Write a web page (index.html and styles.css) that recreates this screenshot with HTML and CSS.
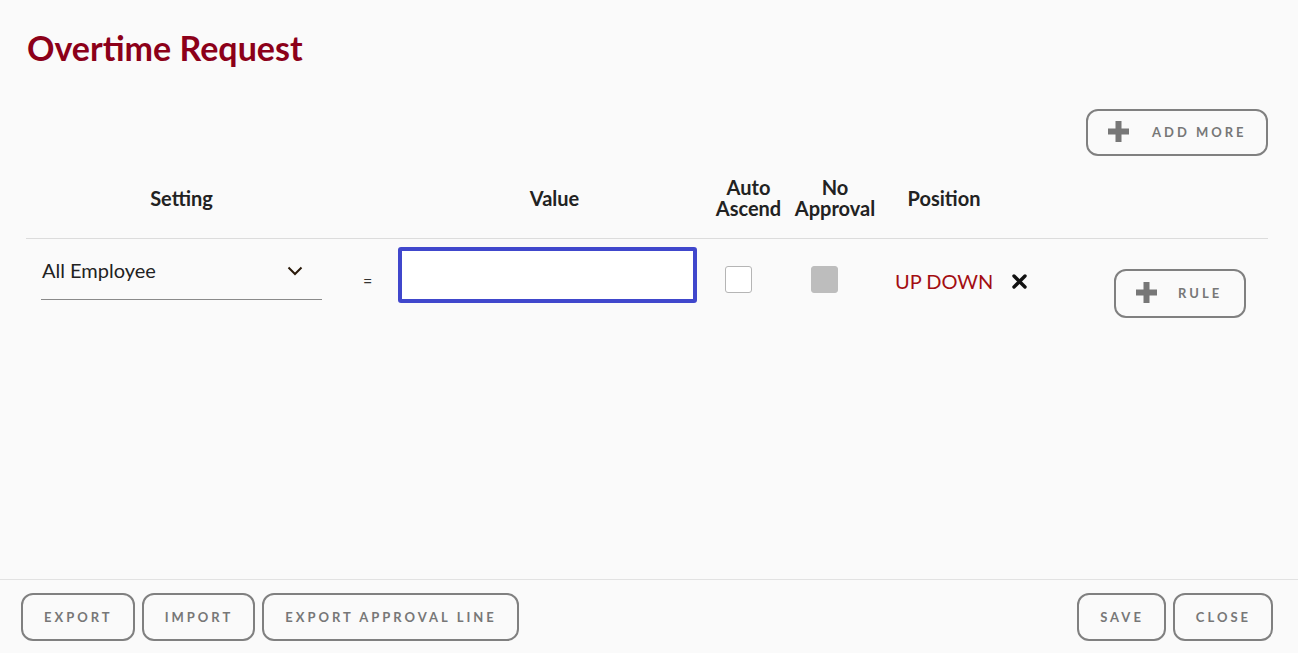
FILE: index.html
```html
<!DOCTYPE html>
<html>
<head>
<meta charset="utf-8">
<link rel="stylesheet" href="styles.css">
</head>
<body>
<div class="page">
  <main class="main">
    <h1 class="title">Overtime Request</h1>
    <div class="toolbar">
      <button class="btn btn-icon add-more">
        <svg class="plus" width="21" height="21" viewBox="0 0 21 21"><rect x="7.5" y="0" width="6" height="21" fill="#777"/><rect x="0" y="7.5" width="21" height="6" fill="#777"/></svg>
        <span>ADD MORE</span>
      </button>
    </div>
    <div class="grid head">
      <div class="hc">Setting</div>
      <div class="hc"></div>
      <div class="hc">Value</div>
      <div class="hc"><span class="ln">Auto</span><span class="ln">Ascend</span></div>
      <div class="hc"><span class="ln">No</span><span class="ln">Approval</span></div>
      <div class="hc">Position</div>
      <div class="hc"></div>
    </div>
    <div class="grid row">
      <div class="cell">
        <div class="select">
          <span>All Employee</span>
          <svg class="chev" width="16" height="10" viewBox="0 0 16 10"><polyline points="1.5,1.5 8,8 14.5,1.5" fill="none" stroke="#2a1a0a" stroke-width="2"/></svg>
        </div>
      </div>
      <div class="cell eq">=</div>
      <div class="cell"><div class="input"></div></div>
      <div class="cell"><div class="check"></div></div>
      <div class="cell"><div class="check disabled"></div></div>
      <div class="cell pos">UP DOWN</div>
      <div class="cell tail">
        <svg class="x" width="15" height="15" viewBox="0 0 15 15"><path d="M2 2 L13 13 M13 2 L2 13" stroke="#111" stroke-width="3.4" stroke-linecap="round"/></svg>
        <button class="btn btn-icon rule">
          <svg class="plus" width="21" height="21" viewBox="0 0 21 21"><rect x="7.5" y="0" width="6" height="21" fill="#777"/><rect x="0" y="7.5" width="21" height="6" fill="#777"/></svg>
          <span>RULE</span>
        </button>
      </div>
    </div>
  </main>
  <footer class="footer">
    <div class="group">
      <button class="btn fbtn">EXPORT</button>
      <button class="btn fbtn">IMPORT</button>
      <button class="btn fbtn">EXPORT APPROVAL LINE</button>
    </div>
    <div class="group">
      <button class="btn fbtn">SAVE</button>
      <button class="btn fbtn">CLOSE</button>
    </div>
  </footer>
</div>
</body>
</html>
```

FILE: styles.css
```css
* { box-sizing: border-box; }
html, body { margin: 0; padding: 0; }
body {
  background: #fafafa;
  font-family: Lato, "Open Sans", sans-serif;
  color: #222;
}
.page {
  height: 653px;
  display: flex;
  flex-direction: column;
}
.main {
  flex: 1;
  padding: 0 30px 0 26px;
}
.title {
  margin: 0;
  padding: 27px 0 0 1px;
  font-size: 34px;
  line-height: 42px;
  font-weight: 700;
  color: #8c0019;
}
.toolbar {
  display: flex;
  justify-content: flex-end;
  margin-top: 40px;
}
.btn {
  font-family: Lato, sans-serif;
  background: transparent;
  border: 2px solid #808080;
  border-radius: 12px;
  color: #777;
  font-weight: 700;
  font-size: 13px;
  letter-spacing: 3px;
  cursor: pointer;
  padding: 0;
}
.btn-icon {
  display: flex;
  align-items: center;
  padding-bottom: 2px;
}
.add-more {
  width: 182px;
  height: 47px;
  padding-left: 20px;
}
.add-more span { margin-left: 23px; }
.grid {
  display: grid;
  grid-template-columns: 311px 61px 313px 75px 98px 120px 1fr;
}
.head {
  height: 83px;
  align-items: center;
  border-bottom: 1px solid #dcdcdc;
}
.hc {
  text-align: center;
  font-size: 20px;
  line-height: 21px;
  font-weight: 700;
  color: #222;
  padding-top: 2px;
}
.ln {
  display: block;
  height: 21px;
  line-height: 21px;
}
.row {
  align-items: start;
}
.select {
  margin: 12px 0 0 15px;
  width: 281px;
  height: 49px;
  padding: 0 19px 10px 1px;
  border-bottom: 1px solid #8a8a8a;
  display: flex;
  align-items: center;
  justify-content: space-between;
  font-size: 20px;
  color: #222;
}
.chev { margin-top: 2px; }
.eq {
  padding-left: 26px;
  margin-top: 31px;
  font-size: 16px;
  line-height: 22px;
  color: #333;
}
.input {
  margin-top: 8px;
  width: 299px;
  height: 56px;
  border: 4px solid #4047cc;
  border-radius: 3px;
  background: #fff;
}
.check {
  margin: 27px 0 0 14px;
  width: 27px;
  height: 27px;
  border: 1px solid #b5b5b5;
  border-radius: 3px;
  background: #fff;
}
.check.disabled {
  margin-left: 25px;
  background: #bdbdbd;
  border-color: #bdbdbd;
}
.pos {
  margin-top: 30px;
  padding-left: 11px;
  font-size: 20px;
  line-height: 24px;
  color: #a30d12;
}
.tail {
  display: flex;
  align-items: flex-start;
}
.x {
  margin: 35px 0 0 8px;
}
.rule {
  margin: 30px 0 0 87px;
  width: 132px;
  height: 49px;
  padding-left: 20px;
}
.rule span { margin-left: 21px; }
.footer {
  height: 74px;
  border-top: 1px solid #e2e2e2;
  padding: 13px 25px 0 21px;
  display: flex;
  justify-content: space-between;
  align-items: flex-start;
}
.group {
  display: flex;
  gap: 7px;
}
.fbtn {
  height: 48px;
  padding: 0 20px 0 21px;
}
```
